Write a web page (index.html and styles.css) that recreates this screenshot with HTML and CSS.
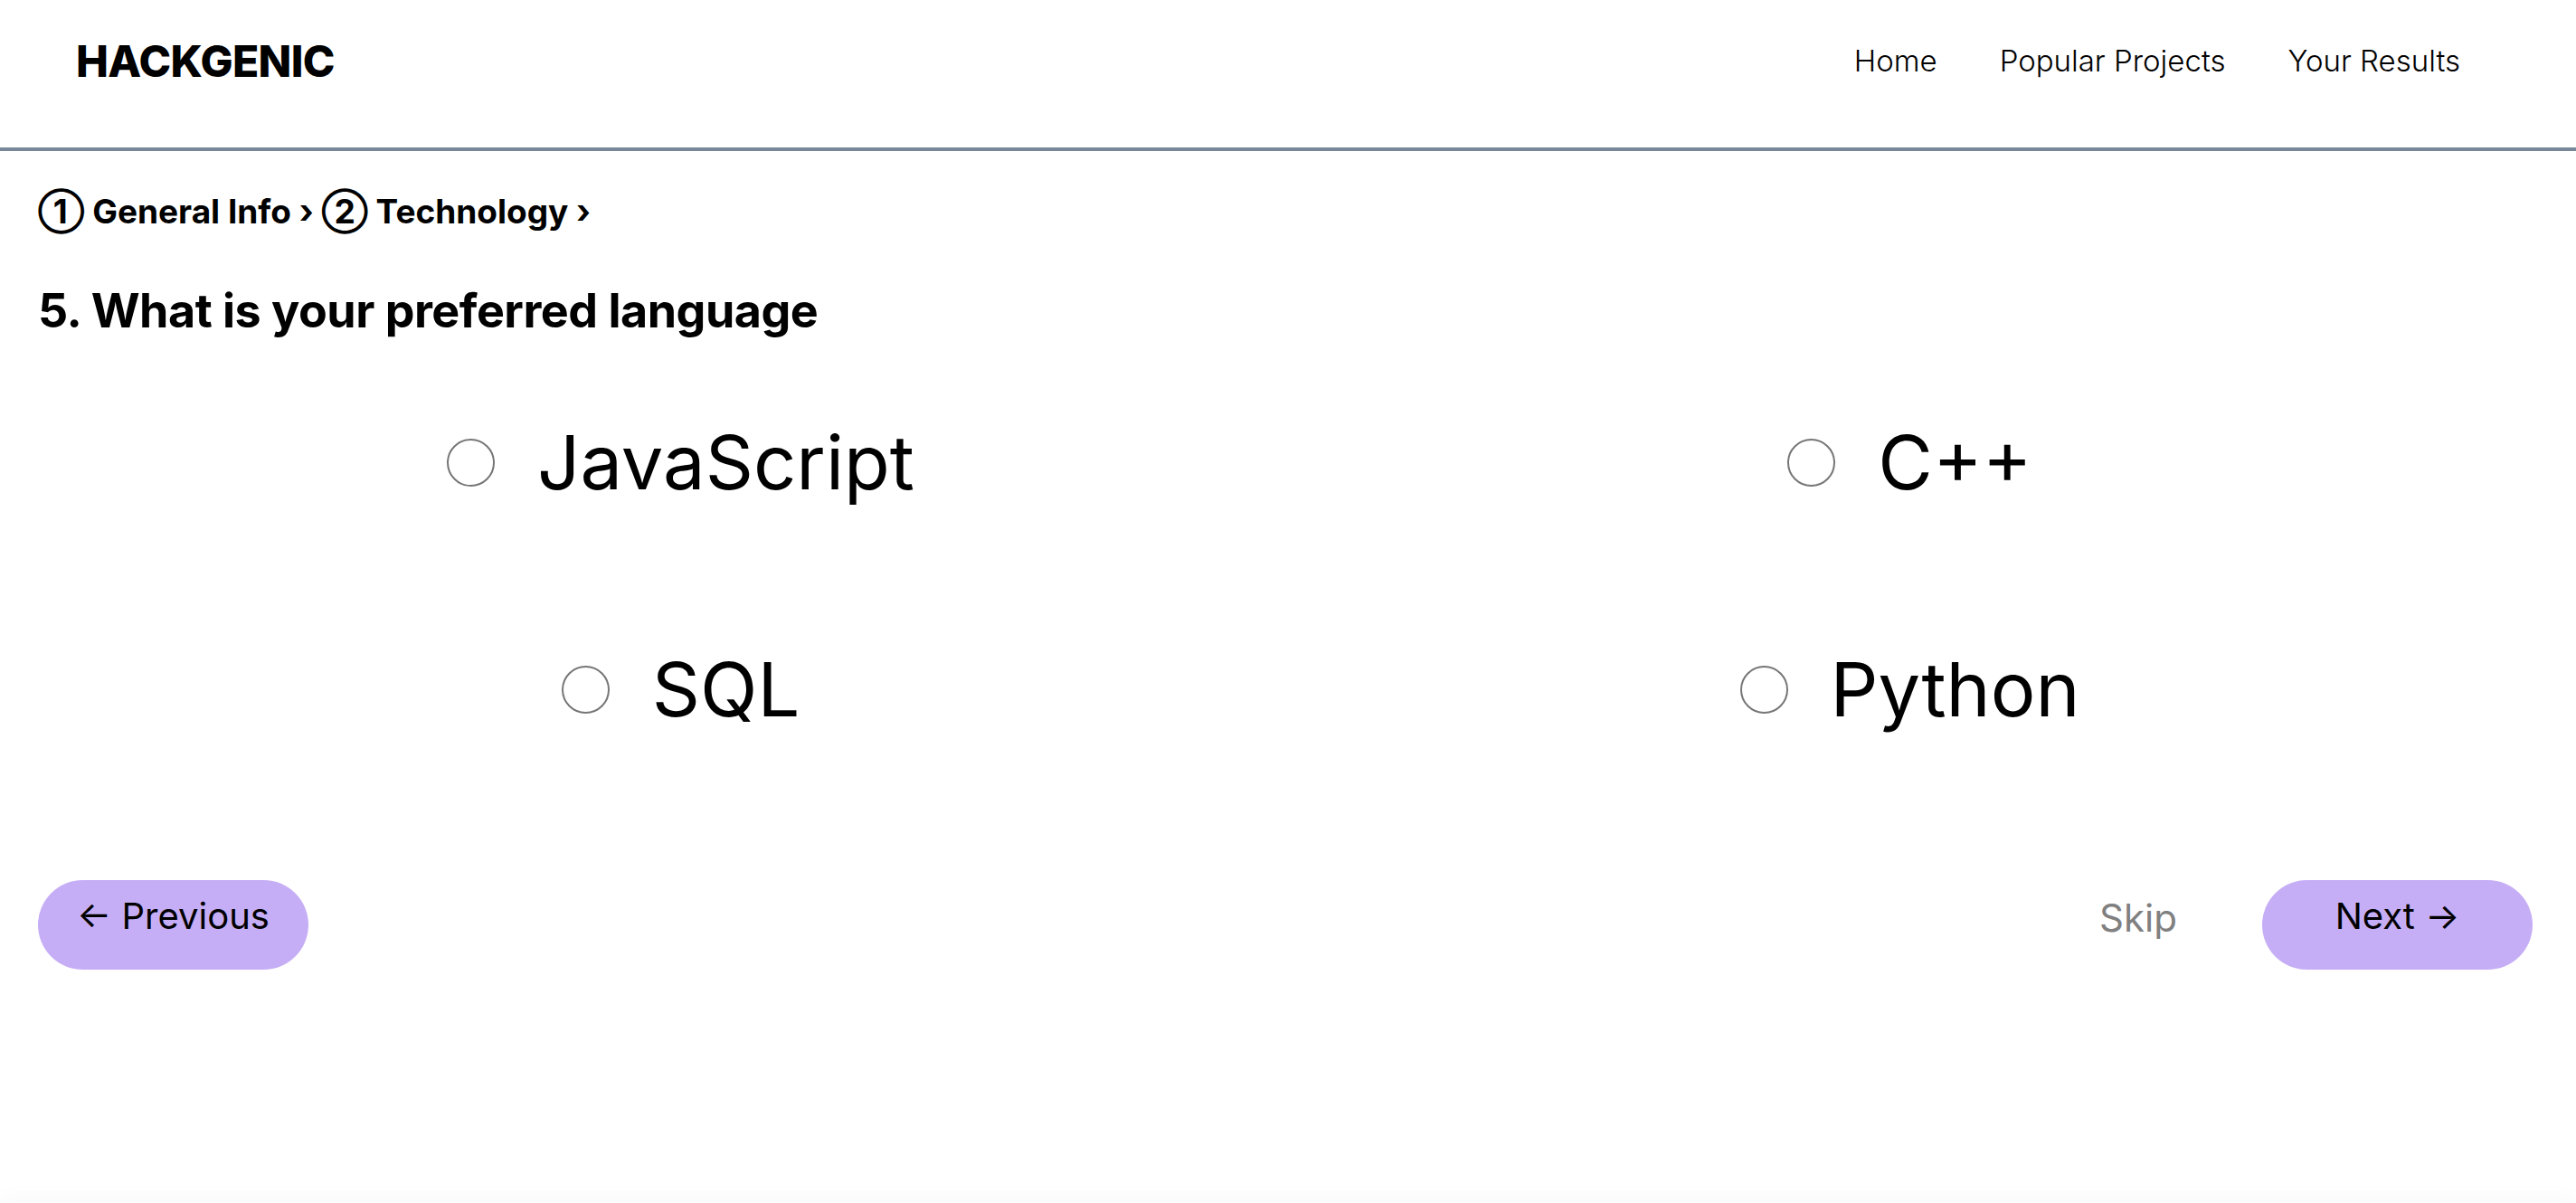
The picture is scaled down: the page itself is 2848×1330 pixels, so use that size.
FILE: index.html
```html
<!DOCTYPE html>
<html lang="en">
<head>
<meta charset="utf-8">
<title>Hackgenic</title>
<link rel="stylesheet" href="styles.css">
</head>
<body>
<header class="topbar">
  <div class="logo">HACKGENIC</div>
  <nav class="nav">
    <a href="#">Home</a>
    <a href="#">Popular Projects</a>
    <a href="#">Your Results</a>
  </nav>
</header>
<main class="quiz">
  <div class="crumbs">① General Info › ② Technology ›</div>
  <h2 class="question">5. What is your preferred language</h2>
  <div class="options">
    <label class="option"><input type="radio" name="lang"><span>JavaScript</span></label>
    <label class="option"><input type="radio" name="lang"><span>C++</span></label>
    <label class="option"><input type="radio" name="lang"><span>SQL</span></label>
    <label class="option"><input type="radio" name="lang"><span>Python</span></label>
  </div>
  <div class="actions">
    <button class="pill">← Previous</button>
    <div class="right">
      <span class="skip">Skip</span>
      <button class="pill">Next →</button>
    </div>
  </div>
</main>
<footer class="foot"></footer>
</body>
</html>
```
FILE: styles.css
```css
* { box-sizing: border-box; }
html, body { margin: 0; padding: 0; }
body {
  font-family: Inter, "Noto Sans", "DejaVu Sans", sans-serif;
  color: #000;
  background: #fff;
}
.topbar {
  height: 167px;
  display: flex;
  align-items: center;
  justify-content: space-between;
  padding: 0 128px 29px 84px;
  border-bottom: 4px solid #778899;
}
.logo {
  font-size: 48px;
  font-weight: 800;
  letter-spacing: -0.6px;
}
.nav {
  display: flex;
  gap: 69px;
}
.nav a {
  color: #000;
  text-decoration: none;
  font-size: 33px;
  font-weight: 300;
}
.quiz {
  padding: 0 48px 0 42px;
}
.crumbs {
  margin-top: 46px;
  font-size: 37px;
  line-height: 42px;
  font-weight: 700;
}
.question {
  margin: 58px 0 0 0;
  font-size: 52px;
  line-height: 62px;
  font-weight: 700;
  letter-spacing: -0.5px;
}
.options {
  display: grid;
  grid-template-columns: 1fr 1fr;
  grid-auto-rows: 120px;
  row-gap: 131px;
  justify-items: center;
  align-items: center;
  margin: 76px 9px 0 31px;
}
.option {
  display: flex;
  align-items: center;
  gap: 47px;
  font-size: 83px;
  line-height: 1;
}
.option input {
  appearance: none;
  -webkit-appearance: none;
  margin: 0;
  width: 53px;
  height: 53px;
  border: 2px solid #767676;
  border-radius: 50%;
  background: #fff;
}
.actions {
  margin-top: 151px;
  display: flex;
  justify-content: space-between;
  align-items: center;
}
.right {
  display: flex;
  align-items: center;
  gap: 94px;
}
.pill {
  width: 299px;
  height: 99px;
  border: none;
  border-radius: 50px;
  background: #c6aef6;
  color: #000;
  font-family: inherit;
  font-size: 40px;
  padding: 0 0 20px 0;
  display: flex;
  align-items: center;
  justify-content: center;
}
.skip {
  color: #808080;
  font-size: 42px;
  padding-bottom: 16px;
}
.foot {
  margin-top: 257px;
  height: 60px;
  box-shadow: 0 0 30px rgba(0,0,0,0.04);
}
```
